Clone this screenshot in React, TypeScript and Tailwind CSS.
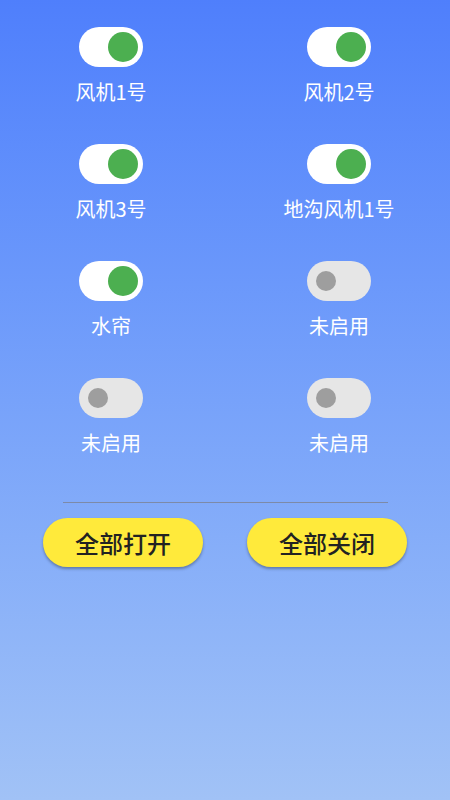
const FONT = { fontFamily: '"Noto Sans CJK SC", "Noto Sans", sans-serif' };

const DEVICES = [
  { name: "风机1号", on: true },
  { name: "风机2号", on: true },
  { name: "风机3号", on: true },
  { name: "地沟风机1号", on: true },
  { name: "水帘", on: true },
  { name: "未启用", on: false },
  { name: "未启用", on: false },
  { name: "未启用", on: false },
];

function Toggle({ on }: { on: boolean }) {
  return on ? (
    <div className="w-[64px] h-[40px] rounded-full bg-white flex items-center justify-end pr-[5px]">
      <div className="w-[30px] h-[30px] rounded-full bg-[#4caf50]" />
    </div>
  ) : (
    <div className="w-[64px] h-[40px] rounded-full bg-[#e6e6e6] flex items-center pl-[9px]">
      <div className="w-[20px] h-[20px] rounded-full bg-[#9e9e9e]" />
    </div>
  );
}

export default function App() {
  return (
    <div
      className="w-[450px] h-[800px] bg-gradient-to-b from-[#4f7ffc] to-[#a1c2f6] overflow-hidden"
      style={FONT}
    >
      <div className="grid grid-cols-[228px_228px] ml-[-3px] gap-y-[39px] pt-[27px]">
        {DEVICES.map((d, i) => (
          <div key={i} className="flex flex-col items-center">
            <Toggle on={d.on} />
            <div className="mt-[12px] h-[26px] leading-[26px] text-[20px] text-white">
              {d.name}
            </div>
          </div>
        ))}
      </div>
      <div className="mx-auto mt-[46px] w-[325px] h-px bg-[#7d8aa8]" />
      <div className="flex justify-center gap-[44px] mt-[15px]">
        <button className="w-[160px] h-[49px] rounded-full bg-[#ffea3b] text-[24px] font-medium text-[#222] shadow-[0_2px_3px_rgba(0,0,0,0.3)]">
          全部打开
        </button>
        <button className="w-[160px] h-[49px] rounded-full bg-[#ffea3b] text-[24px] font-medium text-[#222] shadow-[0_2px_3px_rgba(0,0,0,0.3)]">
          全部关闭
        </button>
      </div>
    </div>
  );
}
